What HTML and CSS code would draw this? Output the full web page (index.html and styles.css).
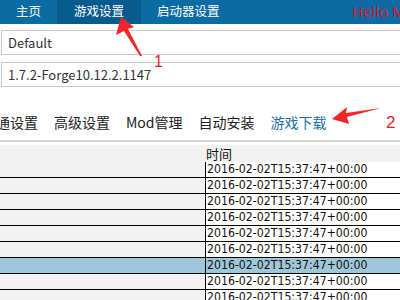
FILE: index.html
```html
<!DOCTYPE html>
<html lang="zh-CN">
<head>
    <meta charset="UTF-8">
    <title>启动器</title>
    <link rel="stylesheet" href="styles.css">
</head>
<body>
    <nav class="topbar">
        <a class="nav-item">主页</a>
        <a class="nav-item active">游戏设置</a>
        <a class="nav-item">启动器设置</a>
        <span class="greeting">Hello Mi</span>
    </nav>

    <div class="fields">
        <div class="field">Default</div>
        <div class="field">1.7.2-Forge10.12.2.1147</div>
    </div>

    <div class="tabs">
        <span class="tab">普通设置</span>
        <span class="tab">高级设置</span>
        <span class="tab">Mod管理</span>
        <span class="tab">自动安装</span>
        <span class="tab current">游戏下载</span>
    </div>

    <div class="grid">
        <div class="row head">
            <div class="cell-name"></div>
            <div class="cell-time">时间</div>
        </div>
        <div class="row"><div class="cell-name"></div><div class="cell-time">2016-02-02T15:37:47+00:00</div></div>
        <div class="row"><div class="cell-name"></div><div class="cell-time">2016-02-02T15:37:47+00:00</div></div>
        <div class="row"><div class="cell-name"></div><div class="cell-time">2016-02-02T15:37:47+00:00</div></div>
        <div class="row"><div class="cell-name"></div><div class="cell-time">2016-02-02T15:37:47+00:00</div></div>
        <div class="row"><div class="cell-name"></div><div class="cell-time">2016-02-02T15:37:47+00:00</div></div>
        <div class="row"><div class="cell-name"></div><div class="cell-time">2016-02-02T15:37:47+00:00</div></div>
        <div class="row selected"><div class="cell-name"></div><div class="cell-time">2016-02-02T15:37:47+00:00</div></div>
        <div class="row"><div class="cell-name"></div><div class="cell-time">2016-02-02T15:37:47+00:00</div></div>
        <div class="row"><div class="cell-name"></div><div class="cell-time">2016-02-02T15:37:47+00:00</div></div>
    </div>

    <!-- annotation arrows -->
    <svg class="marks" width="400" height="300" viewBox="0 0 400 300">
        <polygon points="121,17 134,27 128,29 142,56 140,56 124,31 116,35" fill="#f0262a"/>
        <polygon points="332,119 347,107 346,113 381,108 347,117 349,124" fill="#f0262a"/>
    </svg>
    <span class="mark mark-1">1</span>
    <span class="mark mark-2">2</span>
</body>
</html>
```

FILE: styles.css
```css
body {
    font-family: 'Noto Sans CJK SC', 'Noto Sans', sans-serif;
    background-color: #fff;
    margin: 0;
    padding: 0;
    width: 400px;
    height: 300px;
    overflow: hidden;
    position: relative;
}

.topbar {
    display: flex;
    align-items: stretch;
    height: 24px;
    background-color: #0b6ba3;
    margin-left: -1px;
    width: 440px;
}

.nav-item {
    color: #fff;
    font-size: 12.5px;
    line-height: 22px;
    padding: 0 16px;
}

.nav-item:first-child {
    padding-left: 17px;
}

.nav-item.active {
    background-color: #075b8d;
    padding: 0 17px;
}

.greeting {
    position: absolute;
    left: 352px;
    top: 1px;
    color: #e8102c;
    font-family: 'Open Sans', sans-serif;
    font-size: 15px;
    line-height: 20px;
    white-space: nowrap;
}

.fields {
    padding-top: 6px;
    margin-left: 1px;
}

.field {
    width: 440px;
    height: 23px;
    border: 1px solid #c9c9c9;
    margin-bottom: 7px;
    padding-left: 6px;
    font-size: 13px;
    line-height: 23px;
    color: #333;
}

.tabs {
    display: flex;
    gap: 16px;
    margin-top: 25px;
    margin-left: -18px;
    padding-bottom: 8px;
    border-bottom: 2px solid #d6d6d6;
    width: 440px;
}

.tab {
    font-size: 14px;
    line-height: 20px;
    color: #222;
    white-space: nowrap;
}

.tab.current {
    color: #1b6e9f;
}

.grid {
    margin-top: 3px;
    background-color: #f1f2f1;
    width: 440px;
}

.row {
    display: flex;
    height: 15px;
    border-bottom: 1px solid #000;
}

.row.head {
    height: 17px;
    border-bottom: none;
}

.cell-name {
    width: 205px;
}

.cell-time {
    flex: 1;
    border-left: 1px solid #000;
    background-color: #fff;
    padding-left: 1px;
    font-family: 'DejaVu Sans Condensed', 'DejaVu Sans', sans-serif;
    font-size: 12.2px;
    line-height: 15px;
    color: #111;
    white-space: nowrap;
}

.row.head .cell-time {
    border-left: none;
    background-color: transparent;
    padding-left: 1px;
    font-family: 'Noto Sans CJK SC', sans-serif;
    font-size: 13px;
    line-height: 17px;
}

.row.selected .cell-name,
.row.selected .cell-time {
    background-color: #9fc7d9;
}

.marks {
    position: absolute;
    left: 0;
    top: 0;
    pointer-events: none;
}

.mark {
    position: absolute;
    color: #ea1a2c;
    font-family: 'Liberation Sans', sans-serif;
}

.mark-1 {
    left: 154px;
    top: 53px;
    font-size: 16px;
}

.mark-2 {
    left: 386px;
    top: 113px;
    font-size: 17px;
}
```
